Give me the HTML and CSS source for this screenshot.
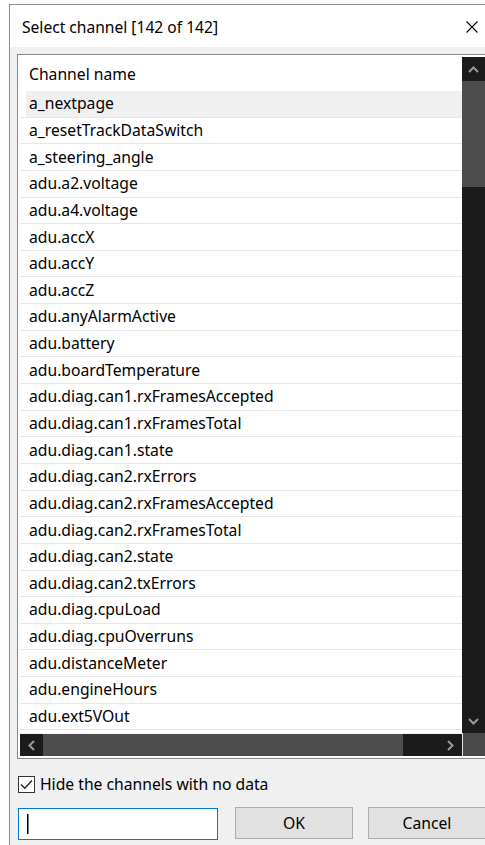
FILE: index.html
```html
<!DOCTYPE html>
<html lang="en">
<head>
<meta charset="utf-8">
<title>Select channel</title>
<link rel="stylesheet" href="styles.css">
</head>
<body>
<div class="window">
  <div class="titlebar">
    <span class="title">Select channel [142 of 142]</span>
    <svg class="close" width="12" height="12" viewBox="0 0 12 12" aria-hidden="true">
      <path d="M0.5 0.5 L11.5 11.5 M11.5 0.5 L0.5 11.5" stroke="#000" stroke-width="1.1" fill="none"/>
    </svg>
  </div>

  <div class="content">
    <div class="listbox">
      <div class="list-main">
        <div class="grid">
          <div class="grid-head"><span class="cell">Channel name</span></div>
          <div class="row current"><span class="cell">a_nextpage</span></div>
          <div class="row"><span class="cell">a_resetTrackDataSwitch</span></div>
          <div class="row"><span class="cell">a_steering_angle</span></div>
          <div class="row"><span class="cell">adu.a2.voltage</span></div>
          <div class="row"><span class="cell">adu.a4.voltage</span></div>
          <div class="row"><span class="cell">adu.accX</span></div>
          <div class="row"><span class="cell">adu.accY</span></div>
          <div class="row"><span class="cell">adu.accZ</span></div>
          <div class="row"><span class="cell">adu.anyAlarmActive</span></div>
          <div class="row"><span class="cell">adu.battery</span></div>
          <div class="row"><span class="cell">adu.boardTemperature</span></div>
          <div class="row"><span class="cell">adu.diag.can1.rxFramesAccepted</span></div>
          <div class="row"><span class="cell">adu.diag.can1.rxFramesTotal</span></div>
          <div class="row"><span class="cell">adu.diag.can1.state</span></div>
          <div class="row"><span class="cell">adu.diag.can2.rxErrors</span></div>
          <div class="row"><span class="cell">adu.diag.can2.rxFramesAccepted</span></div>
          <div class="row"><span class="cell">adu.diag.can2.rxFramesTotal</span></div>
          <div class="row"><span class="cell">adu.diag.can2.state</span></div>
          <div class="row"><span class="cell">adu.diag.can2.txErrors</span></div>
          <div class="row"><span class="cell">adu.diag.cpuLoad</span></div>
          <div class="row"><span class="cell">adu.diag.cpuOverruns</span></div>
          <div class="row"><span class="cell">adu.distanceMeter</span></div>
          <div class="row"><span class="cell">adu.engineHours</span></div>
          <div class="row"><span class="cell">adu.ext5VOut</span></div>
        </div>

        <div class="vscroll">
          <div class="sb-btn">
            <svg width="11" height="7" viewBox="0 0 11 7"><path d="M1 6 L5.5 1.5 L10 6" stroke="#9a9a9a" stroke-width="2" fill="none"/></svg>
          </div>
          <div class="vthumb"></div>
          <div class="sb-track"></div>
          <div class="sb-btn">
            <svg width="11" height="7" viewBox="0 0 11 7"><path d="M1 1 L5.5 5.5 L10 1" stroke="#9a9a9a" stroke-width="2" fill="none"/></svg>
          </div>
        </div>

        <div class="hscroll">
          <div class="sb-btn">
            <svg width="7" height="11" viewBox="0 0 7 11"><path d="M6 1 L1.5 5.5 L6 10" stroke="#9a9a9a" stroke-width="2" fill="none"/></svg>
          </div>
          <div class="hthumb"></div>
          <div class="sb-track"></div>
          <div class="sb-btn">
            <svg width="7" height="11" viewBox="0 0 7 11"><path d="M1 1 L5.5 5.5 L1 10" stroke="#9a9a9a" stroke-width="2" fill="none"/></svg>
          </div>
        </div>

        <div class="corner"></div>
      </div>
    </div>

    <label class="check">
      <span class="box">
        <svg width="13" height="11" viewBox="0 0 13 11"><path d="M1 5.5 L4.8 9.3 L12 1.5" stroke="#262626" stroke-width="1.4" fill="none"/></svg>
      </span>
      <span class="check-label">Hide the channels with no data</span>
    </label>

    <div class="actions">
      <div class="search"><span class="caret"></span></div>
      <button class="btn btn-ok" type="button">OK</button>
      <button class="btn btn-cancel" type="button">Cancel</button>
    </div>
  </div>
</div>
</body>
</html>
```

FILE: styles.css
```css
* {
  box-sizing: border-box;
}

html, body {
  margin: 0;
  padding: 0;
  background: #ffffff;
  overflow: hidden;
  height: 845px;
}

body {
  padding: 4px 0 0 9px;
  font-family: "Segoe UI", "Noto Sans", "Open Sans", sans-serif;
  font-size: 15.7px;
  color: #000;
}

/* dialog frame */
.window {
  width: 496px;
  height: 841px;
  overflow: hidden;
  border-top: 1px solid #8c8c8c;
  border-left: 1px solid #8c8c8c;
  background: #f0f0f0;
}

.titlebar {
  height: 42px;
  background: #ffffff;
  display: flex;
  align-items: center;
  padding: 0 0 0 12px;
}

.title {
  font-size: 15.6px;
  flex: 1;
  padding-top: 2px;
}

.close {
  margin-right: 27px;
  margin-top: 1px;
}

.content {
  padding: 7px 7px 0 7px;
}

/* list box */
.listbox {
  width: 471px;
  border: 1px solid #828790;
  background: #fff;
  padding: 2px;
}

.list-main {
  display: grid;
  grid-template-columns: 442px 23px;
  grid-template-rows: 676px 23px;
}

.grid {
  overflow: hidden;
  background: #fff;
}

.grid-head {
  height: 34px;
  display: flex;
  align-items: center;
  padding-left: 9px;
  padding-bottom: 1px;
}

.row {
  height: 26.65px;
  border-bottom: 1px solid #e8e8e8;
  padding-left: 6px;
  display: flex;
}

.row .cell {
  flex: 1;
  display: flex;
  align-items: center;
  padding-left: 3px;
  padding-bottom: 1px;
  white-space: nowrap;
}

.row.current .cell {
  background: #f0f0f0;
}

/* scroll bars */
.vscroll {
  background: #1b1b1b;
  display: flex;
  flex-direction: column;
}

.hscroll {
  background: #1b1b1b;
  display: flex;
  border-top: 1px solid #f4f4f4;
}

.sb-btn {
  flex: 0 0 24px;
  display: flex;
  align-items: center;
  justify-content: center;
  background: #1b1b1b;
}

.hscroll .sb-btn {
  flex-basis: 23px;
}

.vthumb {
  flex: 0 0 106px;
  background: #4d4d4d;
}

.hthumb {
  flex: 0 0 360px;
  background: #4d4d4d;
}

.sb-track {
  flex: 1;
}

.corner {
  background: #4a4a4a;
  border-left: 1px solid #e6e6e6;
}

/* checkbox */
.check {
  display: flex;
  align-items: center;
  margin: 16px 0 0 1px;
  height: 18px;
}

.box {
  width: 17px;
  height: 17px;
  border: 1px solid #333;
  background: #fff;
  display: flex;
  align-items: center;
  justify-content: center;
}

.check-label {
  margin-left: 5px;
}

/* bottom controls */
.actions {
  display: flex;
  align-items: flex-start;
  margin: 14px 0 0 1px;
}

.search {
  width: 200px;
  height: 32px;
  margin-top: 1px;
  border: 1px solid #0078d7;
  background: #fff;
  padding: 5px 0 0 8px;
}

.caret {
  display: block;
  width: 1px;
  height: 20px;
  background: #000;
  box-shadow: 0.5px 0 0 #000;
}

.btn {
  height: 32px;
  width: 118px;
  border: 1px solid #adadad;
  background: #e1e1e1;
  font: inherit;
  color: #000;
  padding: 0 0 1px 0;
}

.btn-ok {
  margin-left: 17px;
}

.btn-cancel {
  margin-left: 15px;
}
```
